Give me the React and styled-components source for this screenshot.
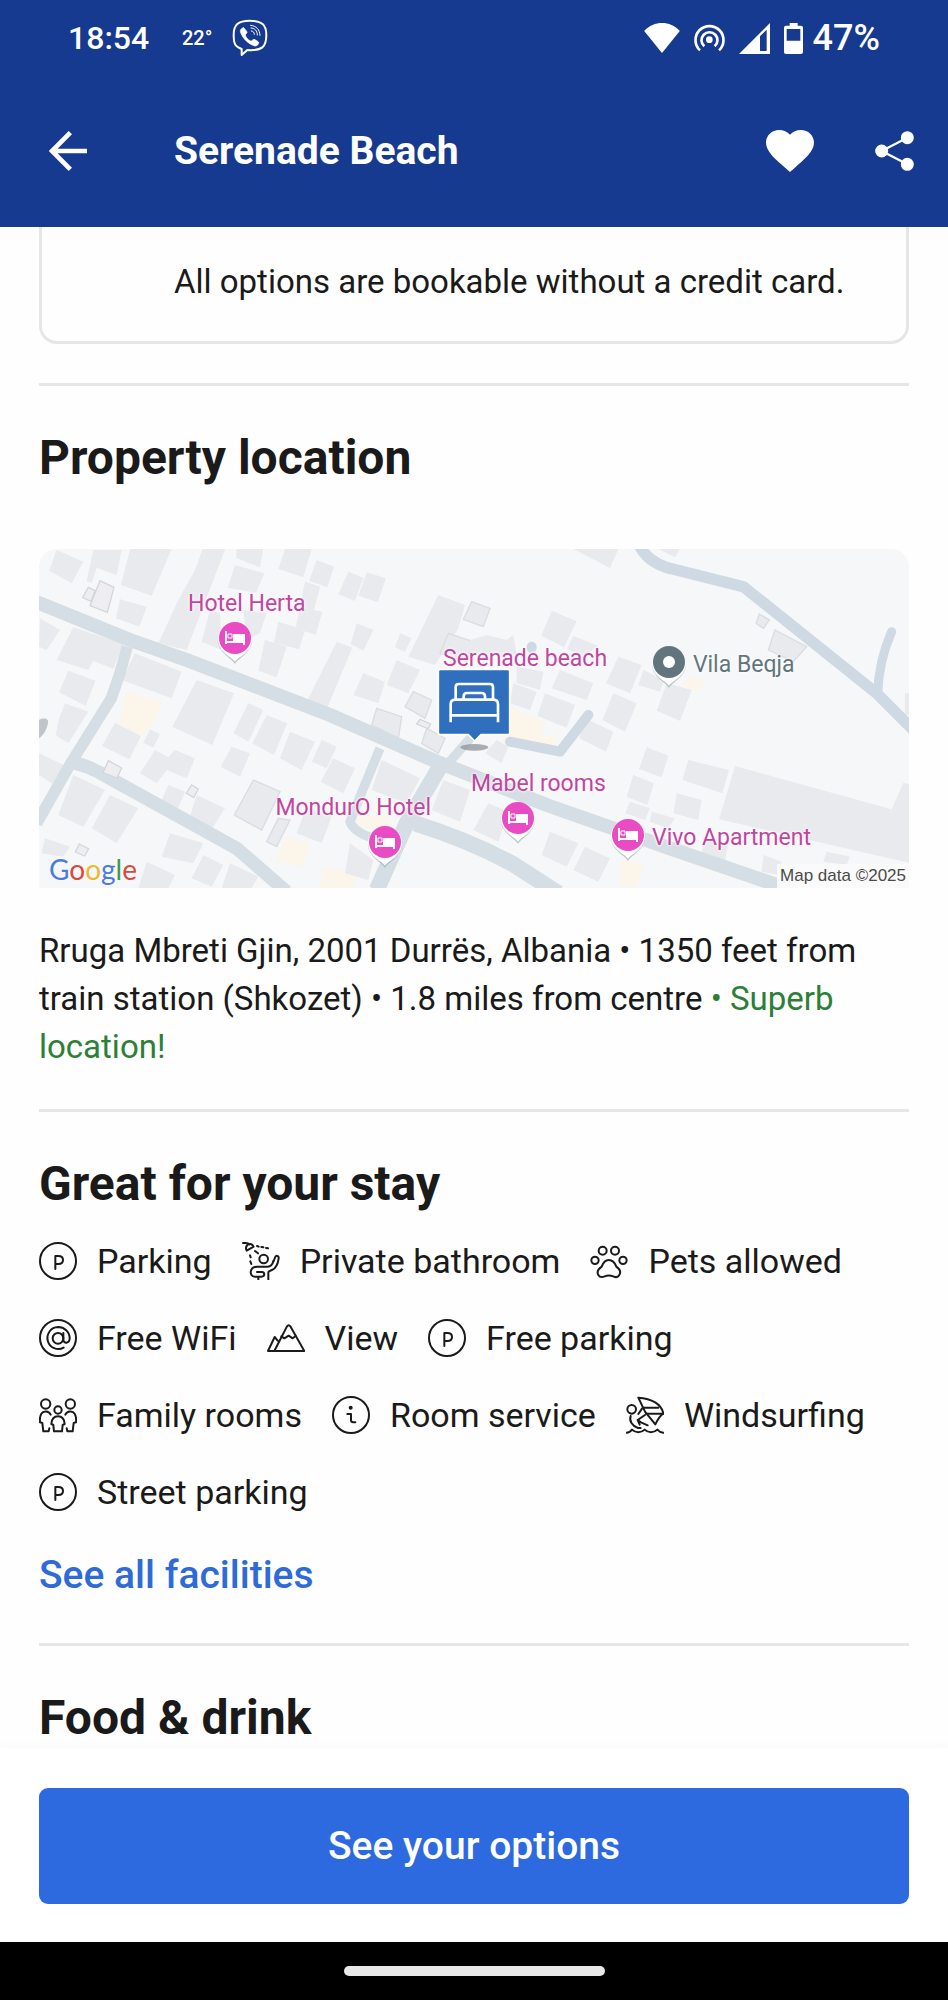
import styled, { createGlobalStyle } from "styled-components";

const COLORS = {
  header: "#163a8f",
  action: "#2d6adf",
  link: "#2f6bd8",
  text: "#1a1a1a",
  green: "#2b8036",
  line: "#e6e6e6",
  hotel: "#c2459f",
  pin: "#e84bc3",
  place: "#62757f",
};

const FACILITIES = [
  { icon: ParkingIcon, label: "Parking" },
  { icon: ShowerIcon, label: "Private bathroom" },
  { icon: PawIcon, label: "Pets allowed" },
  { icon: AtIcon, label: "Free WiFi" },
  { icon: MountainIcon, label: "View" },
  { icon: ParkingIcon, label: "Free parking" },
  { icon: FamilyIcon, label: "Family rooms" },
  { icon: InfoIcon, label: "Room service" },
  { icon: WindsurfIcon, label: "Windsurfing" },
  { icon: ParkingIcon, label: "Street parking" },
];

// x and y are percentages of the map box, at the tip of the pin
// shift moves a label sideways from its pin to keep it clear of its neighbours
const PINS = [
  { x: 22.5, y: 34, name: "Hotel Herta", side: "top", shift: 12 },
  { x: 39.8, y: 94, name: "MondurO Hotel", side: "top", shift: -32 },
  { x: 55.1, y: 87, name: "Mabel rooms", side: "top", shift: 20 },
  { x: 67.7, y: 92, name: "Vivo Apartment", side: "right" },
  { x: 72.4, y: 41, name: "Vila Beqja", side: "right", place: true },
];

function App() {
  return (
    <Screen>
      <GlobalStyle />
      <Top>
        <StatusBar>
          <Clock>18:54</Clock>
          <Degrees>22°</Degrees>
          <ViberIcon />
          <StatusRight>
            <WifiIcon />
            <HotspotIcon />
            <SignalIcon />
            <BatteryIcon />
            <Percent>47%</Percent>
          </StatusRight>
        </StatusBar>
        <Toolbar>
          <IconButton aria-label="Back">
            <svg width="38" height="40" viewBox="0 0 114 120" fill="none" stroke="#fff" strokeWidth="14">
              <path d="M114 60H10M64 5L9 60l55 55" />
            </svg>
          </IconButton>
          <Title>Serenade Beach</Title>
          <IconButton aria-label="Save">
            <svg width="48" height="42" viewBox="2 3 20 18.35" preserveAspectRatio="none" fill="#fff">
              <path d="M12 21.35l-1.45-1.32C5.4 15.36 2 12.28 2 8.5 2 5.42 4.42 3 7.5 3c1.74 0 3.41.81 4.5 2.09C13.09 3.81 14.76 3 16.5 3 19.58 3 22 5.42 22 8.5c0 3.78-3.4 6.86-8.55 11.54L12 21.35z" />
            </svg>
          </IconButton>
          <IconButton aria-label="Share">
            <svg width="40" height="40" viewBox="0 0 120 120" fill="#fff" stroke="#fff" strokeWidth="7">
              <path d="M97 20L20 60l77 40" fill="none" />
              <circle cx="97" cy="20" r="16" />
              <circle cx="20" cy="60" r="16" />
              <circle cx="97" cy="100" r="16" />
            </svg>
          </IconButton>
        </Toolbar>
      </Top>

      <Content>
        <Card>All options are bookable without a credit card.</Card>

        <Section>
          <Heading>Property location</Heading>
          <MapBox>
            <MapDrawing />
            {PINS.map((pin) => (
              <Pin key={pin.name} $x={pin.x} $y={pin.y}>
                <PinIcon place={pin.place} />
                <PinLabel $side={pin.side} $shift={pin.shift} $place={pin.place}>
                  {pin.name}
                </PinLabel>
              </Pin>
            ))}
            <Marker>
              <MarkerLabel>Serenade beach</MarkerLabel>
              <BedMarker />
            </Marker>
            <Google aria-label="Google">
              <Letter $color="#4a7be0">G</Letter>
              <Letter $color="#d9483b">o</Letter>
              <Letter $color="#efb62e">o</Letter>
              <Letter $color="#4a7be0">g</Letter>
              <Letter $color="#3b9a55">l</Letter>
              <Letter $color="#d9483b">e</Letter>
            </Google>
            <MapData>Map data ©2025</MapData>
          </MapBox>
          <Address>
            Rruga Mbreti Gjin, 2001 Durrës, Albania • 1350 feet from train station (Shkozet) • 1.8 miles from centre{" "}
            <Superb>• Superb location!</Superb>
          </Address>
        </Section>

        <Section>
          <Heading>Great for your stay</Heading>
          <FacilityList>
            {FACILITIES.map(({ icon: Icon, label }) => (
              <Facility key={label}>
                <Icon />
                {label}
              </Facility>
            ))}
          </FacilityList>
          <AllLink href="#facilities">See all facilities</AllLink>
        </Section>

        <Section>
          <Heading>Food &amp; drink</Heading>
        </Section>
      </Content>

      <Bottom>
        <ButtonBar>
          <OptionsButton>See your options</OptionsButton>
        </ButtonBar>
        <NavBar>
          <NavPill />
        </NavBar>
      </Bottom>
    </Screen>
  );
}

export default App;

function ViberIcon() {
  return (
    <svg width="36" height="38" viewBox="0 0 108 114" fill="none" stroke="#fff" strokeLinecap="round">
      <path strokeWidth="6" strokeLinejoin="round" d="M53 5C18 5 5 18 5 48c0 27 5 36 24 42v18l17-15c44 3 57-9 57-45C103 18 90 5 53 5z" />
      <path fill="#fff" strokeWidth="2" d="M34 26c-7 2-11 8-8 15 8 19 22 33 42 40 7 1 13-6 12-11-5-5-11-8-14-9-5 1-6 6-10 5-8-3-14-10-16-18 1-4 6-5 5-9-3-6-7-11-11-13z" />
      <path strokeWidth="3" d="M56 19c17 2 27 12 28 30M57 27c12 1 19 8 19 21M58 36c6 1 9 4 9 10" />
    </svg>
  );
}

function WifiIcon() {
  return (
    <svg width="36" height="30" viewBox="0 0 108 91" fill="#fff">
      <path d="M0 24C30-8 78-8 108 24L54 91z" />
    </svg>
  );
}

function HotspotIcon() {
  return (
    <svg width="31" height="28" viewBox="0 0 93 84" fill="none" stroke="#fff" strokeWidth="8">
      <circle cx="46" cy="47" r="10" fill="#fff" stroke="none" />
      <path d="M31 67a24 24 0 1 1 31 0" />
      <path d="M18 79a42 42 0 1 1 57 0" />
    </svg>
  );
}

function SignalIcon() {
  return (
    <svg width="31" height="31" viewBox="0 0 93 93">
      <path fill="#fff" fillRule="evenodd" d="M0 93L93 0v93zM63 40v44h20V20z" />
    </svg>
  );
}

function BatteryIcon() {
  return (
    <svg width="19" height="31" viewBox="0 0 57 93">
      <path fill="#fff" fillRule="evenodd" d="M17 0h24v8h10q6 0 6 6v73q0 6-6 6H6q-6 0-6-6V14q0-6 6-6h11zM8 18v35h41V18z" />
    </svg>
  );
}

function ParkingIcon() {
  return (
    <LineIcon viewBox="0 0 114 114">
      <circle cx="57" cy="57" r="54" />
      <path d="M49 81V42h9q14 0 14 12T58 66h-9" />
    </LineIcon>
  );
}

function InfoIcon() {
  return (
    <LineIcon viewBox="0 0 114 114">
      <circle cx="57" cy="57" r="54" />
      <circle cx="56" cy="35" r="3" fill={COLORS.text} />
      <path d="M46 54h11v18q0 7 7 7h6" />
    </LineIcon>
  );
}

function AtIcon() {
  return (
    <LineIcon viewBox="0 0 114 114">
      <circle cx="57" cy="57" r="54" />
      <circle cx="57" cy="58" r="16" />
      <path d="M73 42v19c0 15 19 13 19-3C92 38 76 24 57 24a33 33 0 1 0 17 62" />
    </LineIcon>
  );
}

function ShowerIcon() {
  return (
    <LineIcon viewBox="0 0 114 114">
      <path d="M3 3h8q8 0 11 4" />
      <path d="M14 26L35 14C30 5 22 4 16 9c-5 5-5 11-2 17z" />
      <path d="M45 12l5 2M58 15l6 1M72 18l6 1M39 27l9 7M24 40l2 6M25 58l3 8" />
      <circle cx="65" cy="51" r="13" />
      <path d="M94 58c4-6 4-11 7-15 4-4 10 0 9 6-2 16-9 30-20 35-6 3-11 3-11 7v22" />
      <path d="M94 58C91 70 87 74 77 74H46c-25 0-25 29-8 30h20c12 0 11-14 2-14H45M49 105v8" />
    </LineIcon>
  );
}

function PawIcon() {
  return (
    <LineIcon viewBox="0 0 114 114">
      <circle cx="38" cy="26" r="12" />
      <circle cx="75" cy="26" r="12" />
      <circle cx="15" cy="55" r="11" />
      <circle cx="99" cy="55" r="11" />
      <path d="M56 54c14 0 19 9 23 20 11 8 14 17 9 25-4 7-12 7-18 4-9-3-18-3-26 0-7 3-15 3-19-4-5-9 0-18 10-25 4-11 8-20 21-20z" />
    </LineIcon>
  );
}

function MountainIcon() {
  return (
    <LineIcon viewBox="0 0 114 114">
      <path d="M22 96L60 22q5-7 10 0l42 74H3l20-42 9 11" />
      <path d="M43 52l9 6 13-8 12 8 9-7" />
    </LineIcon>
  );
}

function FamilyIcon() {
  return (
    <LineIcon viewBox="0 0 114 114">
      <circle cx="20" cy="24" r="14" />
      <circle cx="94" cy="24" r="14" />
      <circle cx="57" cy="42" r="11" />
      <path d="M35 56C30 44 13 43 7 53 3 60 2 70 3 79l7 2 3 25h16l2-9" />
      <path d="M79 56c5-12 22-13 28-3 4 7 5 17 4 26l-7 2-3 25H85l-2-9" />
      <path d="M45 106l-2-19-6-3c1-15 8-23 20-23s19 8 20 23l-6 3-2 19z" />
    </LineIcon>
  );
}

function WindsurfIcon() {
  return (
    <LineIcon viewBox="0 0 114 114">
      <circle cx="17" cy="40" r="13" />
      <path d="M37 5c40 2 70 20 75 48-9 5-17 18-24 32L57 47z" />
      <path d="M51 35h46M60 53h52" />
      <path d="M48 38L37 54M14 60c-5 14 4 30 22 36h8" />
      <path d="M57 57L35 72l10 7 20 9M35 72l6 14" />
      <path d="M2 110q9 0 16-9 8 8 19 8t19-8q8 8 19 8t19-8q8 9 18 9" />
    </LineIcon>
  );
}

function PinIcon({ place }) {
  return (
    <svg width="38" height="44" viewBox="0 0 38 44">
      <path fill="#8fa9a4" opacity=".6" d="M19 44C16 38 2 33 2 20a17 18 0 0 1 34 0c0 13-14 18-17 24z" />
      <path fill="#fff" d="M19 42c-2-5-17-9-17-23a17 17 0 0 1 34 0c0 14-15 18-17 23z" />
      <circle cx="19" cy="18" r="16" fill={place ? COLORS.place : COLORS.pin} />
      {place ? (
        <circle cx="19" cy="18" r="6" fill="#fff" />
      ) : (
        <g fill="none" stroke="#fff" strokeWidth="2">
          <path d="M10 11v13M10 22h19M28 25v-9" />
          <path d="M18 15h10v6H18z" fill="#fff" />
          <path d="M12 14h4v4h-4z" strokeWidth="1" />
        </g>
      )}
    </svg>
  );
}

function BedMarker() {
  return (
    <svg width="74" height="84" viewBox="0 0 222 252">
      <ellipse cx="112" cy="238" rx="42" ry="10" fill="#8f9499" opacity=".75" />
      <path fill="#2f6fbe" stroke="#fff" strokeWidth="5" d="M10 4h202q6 0 6 6v184q0 6-6 6h-80l-19 19-19-19H10q-6 0-6-6V10q0-6 6-6z" />
      <g fill="none" stroke="#fff" strokeWidth="8" strokeLinejoin="round">
        <path d="M41 163v-54q0-14 14-14h114q14 0 14 14v54M41 142h142" />
        <path d="M56 95V57q0-9 9-9h94q9 0 9 9v38" />
        <path d="M80 95V85q0-10 10-10h44q10 0 10 10v10" />
      </g>
    </svg>
  );
}

function MapDrawing() {
  return (
    <Drawing viewBox="27 27 2610 1017" preserveAspectRatio="none" aria-hidden="true">
      <g fill="#fbf6e9">
        <path d="M290 455l110 30-25 60-40 45-70-30zM770 890l70 20-20 70-85-20zM880 985l110 10-25 49H870zM1440 500l110 50-20 45 60-15-40 55-130-30zM1980 410l50 15-30 30-50-20zM1770 960l70 15-20 69-50-10zM985 820l90 10-10 40-80-5z" />
      </g>
      <g fill="#e9eaee">
        <path d="M80 30l80 35-35 65-68-38zM190 30h85l-15 75-60-22-15 45-15-4zM300 27h125l-60 140-92-32zM518 27h68L470 330l-85-20 60-130 50-90zM620 27h80l-10 55-72-28zM765 27h80l-25 85-75-25zM860 60l52 20-20 62-55-20zM615 75l88 25-25 58-85-15zM955 95l45 18-25 70-50-20zM1010 97l58 18-25 72-58-20z" />
        <path d="M270 178l80 22-22 60-70-25zM825 125l45 15-18 70 25 5-20 70-60-20zM745 245l80 25-18 58-75-20zM705 300l65 20-30 92-55-20zM540 210l30 10 5 110-60-25zM640 210l70 10-20 60-40 20zM920 305l47 18-75 180-60-22zM980 250l50 20-30 62-38-20zM1110 280l35 14-20 42-30-15zM1225 165l80 30-20 70-70 110-80-25z" />
        <path d="M30 235l60 35-40 60-23-10zM130 262l150 50-30 75-60-25-15 28-95-30zM115 392l82 30-30 75-80-40zM105 490l70 25-60 95-38-25 10-50zM27 640l75 35-20 65-55-35zM315 340l140 55-30 80-150-55zM500 420l112 40-65 155-120-55zM255 548l78 40-35 70-82-40zM360 568l30 15-20 40-30-15zM375 630l40 22 20-22 60 25-25 60-60-25-30 40-50-30z" />
        <path d="M655 490l45 20-45 95-45-25zM710 525l62 25-40 95-65-35zM780 575l75 30-40 85-65-35zM875 600l45 20-30 65-45-20zM910 655l65 30-35 75-68-35zM605 620l55 20-30 70-58-30zM500 765l85 40-45 70-65-30zM415 735l50 20-25 60-50-25zM130 705l95 45-65 110-75-35zM240 765l85 40-65 105-75-45zM45 895l75 25-20 30-65-10zM420 880l100 30-30 60-95-20zM520 945l60 30-35 65-60-25zM600 970l85 40-20 34h-90zM350 965l85 40-20 39h-90z" />
        <path d="M830 800l75 30-30 80-75-30zM960 910l70 50-15 60-70-20zM1055 660l115 55-40 75-105-40zM1240 720l80 30-30 95-85-35zM1000 400l65 25-20 65-75-25zM1100 360l70 30-35 70-65-25z" />
        <path d="M670 720l80 35-55 115-82-45zM780 840l-40 80-30-15 35-70zM1150 455l55 25-20 55-60-35zM1255 280l75 25-20 60-80-25zM1040 505l75 25-10 65-80-40zM1190 565l55 30-20 45-50-30z" stroke="#d9dce2" strokeWidth="4" />
      </g>
      <g transform="translate(1320)" fill="#e9eaee">
        <path d="M310 27h135l-25 57zM565 27h65l-15 25zM245 212l75 32-38 78-68-35zM310 288l75 30-45 30-50-20zM445 350l70 25-35 85-72-30zM270 390l100 40-20 50-105-35zM225 460l90 35-25 68-88-35zM430 460l70 30-35 85-68-35zM345 535l85 40-22 60-80-40zM520 390l62 30-12 35-65-20zM590 430l75 20-35 92-70-30zM140 380l80 15-10 55-70-20zM130 430l70 25-20 55-60-20z" />
        <path d="M0 300l50-15 60 15 20-15 10 60-140-5zM530 622l65 25-20 65-68-25zM655 660l122 30-20 70-120-40zM490 705l62 25-20 65-62-25zM620 760l75 20-10 60-75-20zM480 785l60 20-15 35-60-20zM545 815l70 20-20 30-55-20zM795 678l470 130 35-80 17 5v235l-570-130zM700 890l75 20-15 80-65-30zM1070 935l70 15-10 25-70-10zM880 945l55 20-10 40-50-10zM240 875l85 35-35 70-75-35zM345 920l75 35-35 70-75-35zM55 790l60 25-30 90-75-35zM80 600l35 20-20 50-50-30zM1305 460h12v65h-12z" />
        <path d="M915 270l95 50-40 45-75-35zM868 222l30 18-18 25-22-15zM5 185l55 20-20 55-60-22z" stroke="#dadce2" strokeWidth="4" />
      </g>
      <g fill="none" stroke="#d5dee4" strokeLinejoin="round">
        <path strokeWidth="42" d="M10 182L300 300l170 60 430 165 320 140 330 130 370 130 350 120 180 40" />
        <path strokeWidth="34" d="M292 320q-20 80-48 155L125 665 20 850" />
        <path strokeWidth="40" d="M115 665q60 10 125 50l380 210 150 130" />
        <path strokeWidth="28" d="M1050 625l-50 120-40 100q10 30 70 50M1325 590l-75 85" />
        <path strokeWidth="48" d="M1230 680l-100 170-90 200M1155 850q160 50 290 120l140 90" />
        <path strokeWidth="30" stroke="#cfd9e3" strokeLinecap="round" d="M1440 605l150 30 85-110M1505 320v5" />
        <path strokeWidth="34" stroke="#cfd9e3" d="M1830 20q30 55 110 70l200 50 400 320 110 110" />
        <path strokeWidth="27" stroke="#cfd9e3" strokeLinecap="round" d="M2585 275q-40 90-42 190" />
      </g>
      <g fill="#eeeef1" stroke="#d3d6dc" strokeWidth="4">
        <path d="M210 122l42 20-20 75-52-20zM175 142l20 10-12 32-25-12zM235 662l40 22-14 30-42-16zM485 735l20 12-14 26-22-14zM148 912l28 14-12 22-28-12zM1170 538l32 14-8 14-34-14z" />
      </g>
      <path fill="#bfc5ca" d="M27 540c15-8 30-5 27 10-4 20-15 38-27 45z" />
    </Drawing>
  );
}

const GlobalStyle = createGlobalStyle`
  * {
    box-sizing: border-box;
    margin: 0;
    padding: 0;
  }

  body {
    background-color: #fefefe;
    color: ${COLORS.text};
    font-family: Roboto, "Liberation Sans", sans-serif;
  }

  svg {
    display: block;
    flex-shrink: 0;
  }
`;

const Screen = styled.div`
  display: flex;
  flex-direction: column;
  min-height: 100vh;
`;

const Top = styled.header`
  position: sticky;
  top: 0;
  z-index: 2;

  background-color: ${COLORS.header};
  color: #ffffff;
`;

const StatusBar = styled.div`
  display: flex;
  align-items: center;

  height: 76px;
  padding: 0 68px;
`;

const Clock = styled.span`
  width: 114px;
  font-size: 32px;
  font-weight: 500;
`;

const Degrees = styled.span`
  width: 50px;
  font-size: 20px;
  font-weight: 500;
`;

const StatusRight = styled.div`
  display: flex;
  align-items: center;
  gap: 14px;

  margin-left: auto;
`;

const Percent = styled.span`
  margin-left: -4px;
  font-size: 36px;
  font-weight: 500;
`;

const Toolbar = styled.div`
  display: flex;
  align-items: center;
  gap: 61px;

  height: 151px;
  padding: 0 33px 2px 49px;
`;

const IconButton = styled.button`
  display: flex;
  background: none;
  border: none;
`;

const Title = styled.h1`
  flex: 1;
  padding-left: 26px;
  font-size: 39px;
  font-weight: 700;
  line-height: 48px;
`;

const Content = styled.main`
  flex: 1;
  padding: 0 39px;
`;

const Card = styled.p`
  padding: 31px 39px 35px 132px;
  margin-bottom: 39px;

  border: 3px solid ${COLORS.line};
  border-top: none;
  border-radius: 0 0 18px 18px;

  font-size: 33px;
  line-height: 48px;
`;

const Section = styled.section`
  padding: 42px 0 38px;
  border-top: 3px solid ${COLORS.line};

  &:last-child {
    padding-bottom: 0;
  }
`;

const Heading = styled.h2`
  font-size: 48px;
  font-weight: 700;
  line-height: 60px;
`;

const MapBox = styled.div`
  position: relative;
  margin: 61px 0 39px;
  overflow: hidden;

  aspect-ratio: 870 / 339;
  background-color: #f6f7f8;
  border-radius: 18px 18px 0 0;
`;

const Drawing = styled.svg`
  width: 100%;
  height: 100%;
`;

const Pin = styled.div`
  position: absolute;
  left: ${(props) => props.$x}%;
  top: ${(props) => props.$y}%;
  transform: translate(-50%, -100%);
`;

const PinLabel = styled.span`
  position: absolute;
  ${(props) =>
    props.$side === "right"
      ? "left: 43px; top: 8px;"
      : `left: calc(50% + ${props.$shift}px); bottom: 47px; transform: translateX(-50%);`}

  color: ${(props) => (props.$place ? COLORS.place : COLORS.hotel)};
  font-size: 23px;
  line-height: 26px;
  white-space: nowrap;
  text-shadow: 0 0 3px #ffffff, 0 0 3px #ffffff;
`;

const Marker = styled.div`
  position: absolute;
  left: 50%;
  top: 35%;
  transform: translateX(-50%);
`;

const MarkerLabel = styled.span`
  position: absolute;
  left: 6px;
  bottom: 80px;

  color: ${COLORS.hotel};
  font-size: 23px;
  line-height: 26px;
  white-space: nowrap;
  text-shadow: 0 0 3px #ffffff, 0 0 3px #ffffff;
`;

const Google = styled.div`
  position: absolute;
  left: 10px;
  bottom: 3px;

  font-family: Lato, sans-serif;
  font-size: 28px;
  line-height: 32px;
  text-shadow: 0 0 2px #ffffff;
`;

const Letter = styled.span`
  color: ${(props) => props.$color};
`;

const MapData = styled.span`
  position: absolute;
  right: 0;
  bottom: 0;

  padding: 0 3px;
  background-color: #fafafa;
  color: #4a4a4a;
  font-family: "Liberation Sans", sans-serif;
  font-size: 17px;
  line-height: 24px;
`;

const Address = styled.p`
  font-size: 33px;
  line-height: 48px;
`;

const Superb = styled.span`
  color: ${COLORS.green};
`;

const FacilityList = styled.ul`
  display: flex;
  flex-wrap: wrap;
  gap: 29px 30px;

  margin: 23px 0 35px;
  list-style: none;
`;

const Facility = styled.li`
  display: flex;
  align-items: center;
  gap: 20px;

  font-size: 34px;
  line-height: 48px;
`;

const LineIcon = styled.svg`
  width: 38px;
  height: 38px;

  fill: none;
  stroke: ${COLORS.text};
  stroke-width: 6;
  stroke-linecap: round;
  stroke-linejoin: round;
`;

const AllLink = styled.a`
  display: block;
  width: fit-content;
  margin-bottom: 6px;

  color: ${COLORS.link};
  font-size: 39px;
  font-weight: 500;
  line-height: 48px;
  text-decoration: none;
`;

const Bottom = styled.footer`
  position: sticky;
  bottom: 0;
  z-index: 2;
`;

const ButtonBar = styled.div`
  padding: 40px 39px 38px;
  background-color: #ffffff;
  box-shadow: 0 -4px 8px rgba(0, 0, 0, 0.02);
`;

const OptionsButton = styled.button`
  width: 100%;
  height: 116px;

  background-color: ${COLORS.action};
  border: none;
  border-radius: 9px;

  color: #ffffff;
  font-family: inherit;
  font-size: 39px;
  font-weight: 500;
`;

const NavBar = styled.div`
  display: flex;
  justify-content: center;

  height: 58px;
  padding-top: 24px;
  background-color: #000000;
`;

const NavPill = styled.div`
  width: 261px;
  height: 10px;
  background-color: #e8e8e8;
  border-radius: 5px;
`;
